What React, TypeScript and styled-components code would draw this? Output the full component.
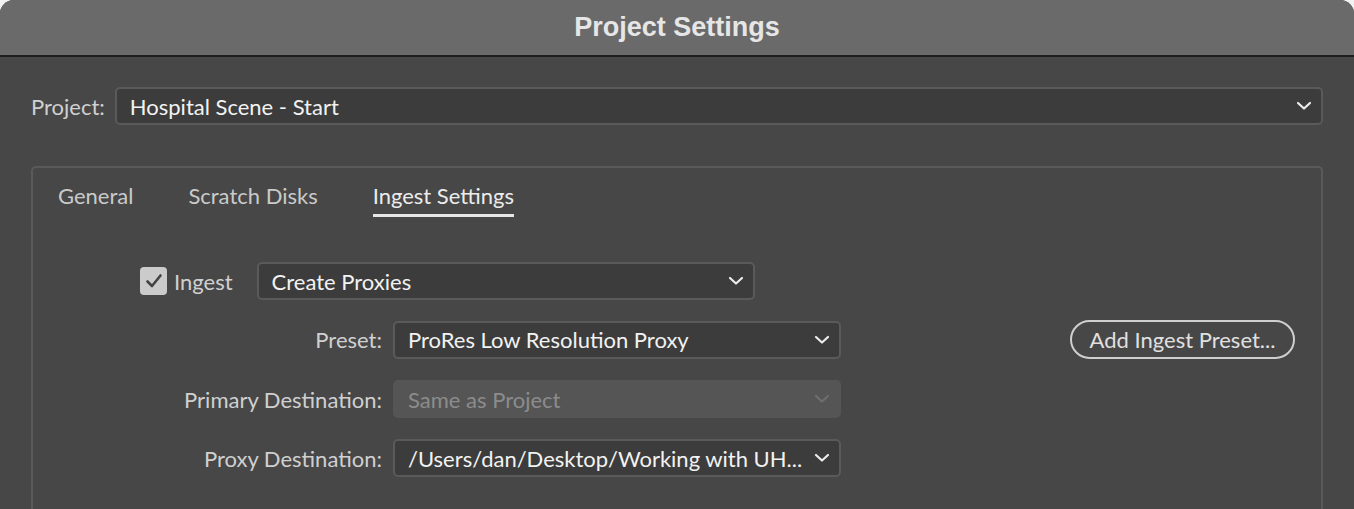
import React from 'react';
import styled, { createGlobalStyle } from 'styled-components';

const GlobalStyle = createGlobalStyle`
  html, body {
    margin: 0;
    padding: 0;
    background: #f2f2f2;
  }
  body {
    font-family: Lato, "Noto Sans", sans-serif;
  }
`;

function Chevron({ dim }: { dim?: boolean }) {
  return (
    <svg width="16" height="10" viewBox="0 0 16 10">
      <path
        d="M2 2 L8 7.5 L14 2"
        fill="none"
        stroke={dim ? '#6e6e6e' : '#ececec'}
        strokeWidth="2.2"
        strokeLinecap="round"
        strokeLinejoin="round"
      />
    </svg>
  );
}

function Select({ value, width, disabled }: { value: string; width?: number; disabled?: boolean }) {
  return (
    <SelectBox $width={width} $disabled={disabled}>
      <SelectValue $disabled={disabled}>{value}</SelectValue>
      <Chevron dim={disabled} />
    </SelectBox>
  );
}

function App() {
  return (
    <>
      <GlobalStyle />
      <Window>
        <TitleBar>Project Settings</TitleBar>
        <Body>
          <ProjectRow>
            <Label>Project:</Label>
            <Select value="Hospital Scene - Start" />
          </ProjectRow>

          <GroupBox>
            <Tabs>
              <Tab>General</Tab>
              <Tab>Scratch Disks</Tab>
              <Tab $active>Ingest Settings</Tab>
            </Tabs>

            <IngestRow>
              <CheckLabel>
                <CheckBox>
                  <svg width="18" height="16" viewBox="0 0 18 16">
                    <path
                      d="M2.5 8.5 L7 13 L15.5 2.5"
                      fill="none"
                      stroke="#444"
                      strokeWidth="2.6"
                      strokeLinecap="round"
                      strokeLinejoin="round"
                    />
                  </svg>
                </CheckBox>
                Ingest
              </CheckLabel>
              <Select value="Create Proxies" width={498} />
            </IngestRow>

            <FormGrid>
              <FieldLabel>Preset:</FieldLabel>
              <Select value="ProRes Low Resolution Proxy" width={448} />
              <PillButton>Add Ingest Preset...</PillButton>

              <FieldLabel>Primary Destination:</FieldLabel>
              <Select value="Same as Project" width={448} disabled />
              <span />

              <FieldLabel>Proxy Destination:</FieldLabel>
              <Select value="/Users/dan/Desktop/Working with UH..." width={448} />
              <span />
            </FormGrid>
          </GroupBox>
        </Body>
      </Window>
    </>
  );
}

const Window = styled.div`
  width: 1354px;
  height: 509px;
  background: #474747;
  border-radius: 14px 14px 0 0;
  overflow: hidden;
  display: flex;
  flex-direction: column;
`;

const TitleBar = styled.div`
  height: 57px;
  box-sizing: border-box;
  flex-shrink: 0;
  background: #6a6a6a;
  border-bottom: 2px solid #1e1e1e;
  display: flex;
  align-items: center;
  justify-content: center;
  color: #e6e6e6;
  font-family: "Liberation Sans", Arial, sans-serif;
  font-size: 27px;
  font-weight: 700;
`;

const Body = styled.div`
  padding: 30px 31px 0 31px;
  display: flex;
  flex-direction: column;
  flex: 1;
`;

const ProjectRow = styled.div`
  display: flex;
  align-items: center;
  gap: 10px;
`;

const Label = styled.span`
  color: #d0d0d0;
  font-size: 22px;
`;

const SelectBox = styled.div<{ $width?: number; $disabled?: boolean }>`
  ${(p) => (p.$width ? `width: ${p.$width}px;` : 'flex: 1;')}
  height: 38px;
  box-sizing: border-box;
  background: ${(p) => (p.$disabled ? '#555555' : '#3c3c3c')};
  border: 2px solid ${(p) => (p.$disabled ? '#555555' : '#5a5a5a')};
  border-radius: 5px;
  display: flex;
  align-items: center;
  justify-content: space-between;
  padding: 0 9px 0 13px;
`;

const SelectValue = styled.span<{ $disabled?: boolean }>`
  color: ${(p) => (p.$disabled ? '#8c8c8c' : '#f2f2f2')};
  font-size: 22px;
  white-space: nowrap;
`;

const GroupBox = styled.div`
  margin-top: 41px;
  flex: 1;
  border: 2px solid #5a5a5a;
  border-bottom: none;
  border-radius: 5px 5px 0 0;
  padding: 13px 26px 0 25px;
  display: flex;
  flex-direction: column;
`;

const Tabs = styled.div`
  display: flex;
  gap: 55px;
`;

const Tab = styled.span<{ $active?: boolean }>`
  font-size: 22px;
  line-height: 30px;
  color: ${(p) => (p.$active ? '#ececec' : '#cacaca')};
  padding-bottom: 3px;
  border-bottom: 3px solid ${(p) => (p.$active ? '#e6e6e6' : 'transparent')};
`;

const IngestRow = styled.div`
  margin-top: 45px;
  padding-left: 82px;
  display: flex;
  align-items: center;
  gap: 24px;
`;

const CheckLabel = styled.label`
  display: flex;
  align-items: center;
  gap: 7px;
  color: #d0d0d0;
  font-size: 22px;
`;

const CheckBox = styled.span`
  width: 27px;
  height: 28px;
  border-radius: 4px;
  background: #cbcbcb;
  display: flex;
  align-items: center;
  justify-content: center;
`;

const FormGrid = styled.div`
  margin-top: 20px;
  display: grid;
  grid-template-columns: 324px 448px 1fr;
  column-gap: 11px;
  row-gap: 21px;
  align-items: center;
`;

const FieldLabel = styled.span`
  color: #d0d0d0;
  font-size: 22px;
  text-align: right;
`;

const PillButton = styled.button`
  justify-self: end;
  width: 225px;
  height: 39px;
  border: 2px solid #cfcfcf;
  border-radius: 20px;
  background: transparent;
  color: #e0e0e0;
  font-family: Lato, "Noto Sans", sans-serif;
  font-size: 22px;
  padding: 0;
`;

export default App;
